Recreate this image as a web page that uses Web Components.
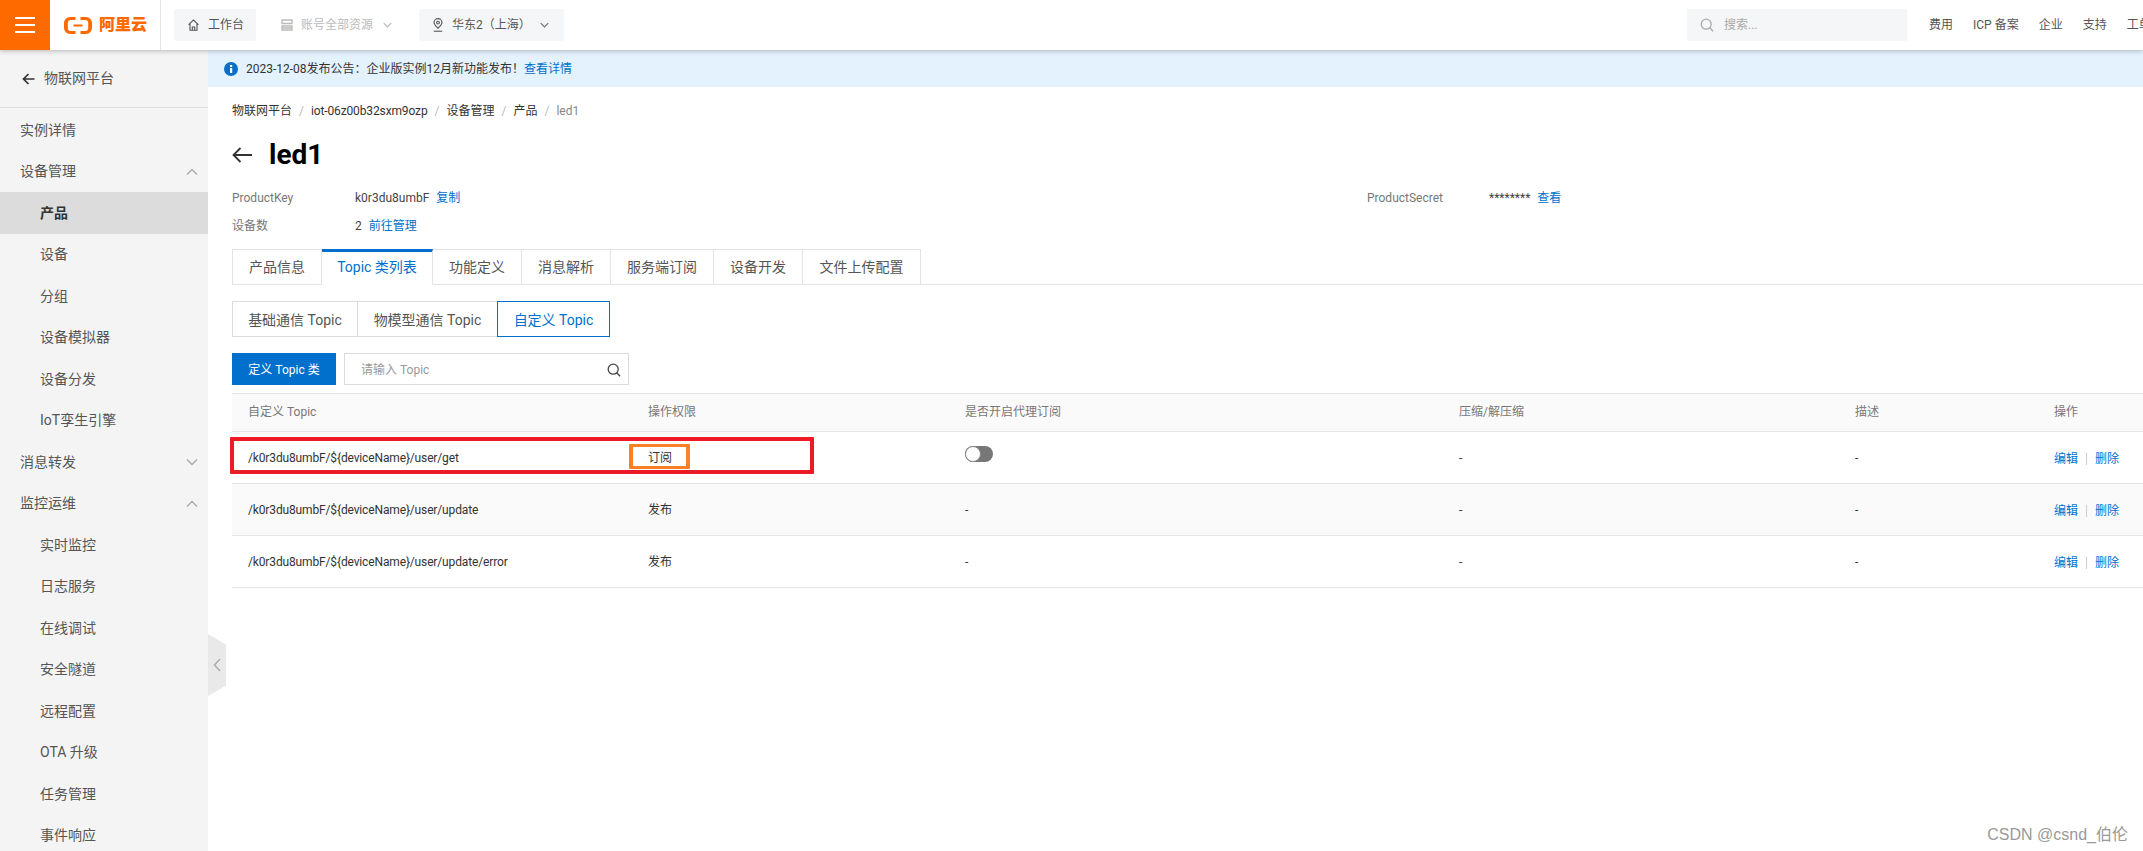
<!DOCTYPE html>
<html lang="zh">
<head>
<meta charset="utf-8">
<title>led1</title>
<style>
  html, body { margin: 0; height: 100%; overflow: hidden; }
  body { font: 12px/1.5 Roboto, "Noto Sans CJK SC", sans-serif; color: #333; background: #fff; }
</style>
</head>
<body>
<iot-app>
  <iot-topbar slot="top"></iot-topbar>
  <iot-sidenav slot="side">
    <nav-item>实例详情</nav-item>
    <nav-item arrow="up">设备管理</nav-item>
    <nav-item sub active>产品</nav-item>
    <nav-item sub>设备</nav-item>
    <nav-item sub>分组</nav-item>
    <nav-item sub>设备模拟器</nav-item>
    <nav-item sub>设备分发</nav-item>
    <nav-item sub>IoT孪生引擎</nav-item>
    <nav-item arrow="down">消息转发</nav-item>
    <nav-item arrow="up">监控运维</nav-item>
    <nav-item sub>实时监控</nav-item>
    <nav-item sub>日志服务</nav-item>
    <nav-item sub>在线调试</nav-item>
    <nav-item sub>安全隧道</nav-item>
    <nav-item sub>远程配置</nav-item>
    <nav-item sub>OTA 升级</nav-item>
    <nav-item sub>任务管理</nav-item>
    <nav-item sub>事件响应</nav-item>
  </iot-sidenav>
  <notice-bar>2023-12-08发布公告：企业版实例12月新功能发布！<a slot="link">查看详情</a></notice-bar>
  <product-page></product-page>
</iot-app>

<script>
const ICON = {
  down: '<svg width="12" height="8" viewBox="0 0 12 8" fill="none" stroke="currentColor" stroke-width="1.4"><path d="M1 1.5l5 5 5-5"/></svg>',
  up: '<svg width="12" height="8" viewBox="0 0 12 8" fill="none" stroke="currentColor" stroke-width="1.4"><path d="M1 6.5l5-5 5 5"/></svg>',
  search: '<svg width="14" height="14" viewBox="0 0 14 14" fill="none" stroke="currentColor" stroke-width="1.3"><circle cx="6.2" cy="6.2" r="5"/><path d="M9.8 9.8l3.2 3.4"/></svg>'
}

/**
 * Registers a custom element with an open shadow root.
 *
 * @param {string} name - The tag name.
 * @param {string} html - Style and markup of the shadow root.
 */
function define (name, html) {
  const template = document.createElement('template')
  template.innerHTML = html
  customElements.define(name, class extends HTMLElement {
    constructor () {
      super()
      this.attachShadow({ mode: 'open' }).appendChild(template.content.cloneNode(true))
    }
  })
}

define('iot-app', `
  <style>
    :host { display: grid; grid-template: 50px 1fr / 208px 1fr; height: 851px; overflow: hidden; position: relative; }
    .top { grid-column: 1 / 3; position: relative; z-index: 2; }
    .side { display: block; min-height: 0; overflow: hidden; }
    main { min-width: 0; overflow: hidden; }
    .fold { position: absolute; left: 208px; top: 634px; width: 18px; height: 62px; background: #e9e9e9; color: #aaa;
      clip-path: polygon(0 0, 100% 17%, 100% 83%, 0 100%); display: flex; align-items: center; justify-content: center; }
    .mark { position: absolute; right: 15px; bottom: 5px; font: 16px/22px "Liberation Sans", "Noto Sans CJK SC", sans-serif; color: #999; }
  </style>
  <div class="top"><slot name="top"></slot></div>
  <div class="side"><slot name="side"></slot></div>
  <main><slot></slot></main>
  <div class="fold"><svg width="8" height="14" viewBox="0 0 8 14" fill="none" stroke="currentColor" stroke-width="1.4"><path d="M7 1L1.5 7 7 13"/></svg></div>
  <div class="mark">CSDN @csnd_伯伦</div>
`)

define('iot-topbar', `
  <style>
    :host { display: flex; align-items: center; height: 50px; background: #fff; box-shadow: 0 1px 5px rgba(0,0,0,.25); color: #555; }
    .menu { width: 50px; height: 50px; background: #ff6a00; display: flex; align-items: center; justify-content: center; flex: none; }
    .logo { width: 111px; height: 50px; box-sizing: border-box; border-right: 1px solid #e5e5e5; padding-left: 14px; display: flex; align-items: center; gap: 7px; color: #ff6a00; flex: none; }
    .logo b { font-size: 16px; line-height: 20px; letter-spacing: 0; font-weight: 900; }
    .btn { display: flex; align-items: center; height: 32px; background: #f5f6f8; flex: none; box-sizing: border-box; }
    .home { margin-left: 13px; width: 82px; padding-left: 14px; gap: 9px; border-radius: 2px; }
    .acct { margin-left: 25px; background: none; color: #bbb; gap: 8px; }
    .acct i { margin-left: 2px; display: flex; }
    .region { margin-left: 27px; width: 145px; padding: 0 15px 0 14px; gap: 9px; border-radius: 2px; }
    .region i { margin-left: auto; display: flex; color: #777; }
    .right { margin-left: auto; width: 456px; flex: none; display: flex; align-items: center; overflow: hidden; }
    .search { width: 220px; height: 32px; background: #f5f6f8; display: flex; align-items: center; gap: 10px; padding-left: 13px; box-sizing: border-box; color: #aaa; flex: none; }
    .links { display: flex; gap: 20px; margin-left: 22px; white-space: nowrap; flex: none; }
  </style>
  <div class="menu">
    <svg width="20" height="16" viewBox="0 0 20 16" fill="#fff"><rect y="0" width="20" height="2"/><rect y="7" width="20" height="2"/><rect y="14" width="20" height="2"/></svg>
  </div>
  <div class="logo">
    <svg width="28" height="17" viewBox="0 0 28 17"><path fill="#ff6a00" d="M6 0h5.500v3H6.800a3 3 0 0 0-3 3v5a3 3 0 0 0 3 3h4.700v3H6a6 6 0 0 1-6-6V6a6 6 0 0 1 6-6zM16.500 0H22a6 6 0 0 1 6 6v5a6 6 0 0 1-6 6h-5.500v-3h4.700a3 3 0 0 0 3-3V6a3 3 0 0 0-3-3h-4.700zM9.500 7.500h9v2h-9z"/></svg>
    <b>阿里云</b>
  </div>
  <div class="btn home">
    <svg width="11" height="12" viewBox="0 0 11 12" fill="none" stroke="#555" stroke-width="1.1"><path d="M.6 5.600L5.500 1l4.900 4.600M2 4.600v6.600h7V4.600M4.300 11.200V8h2.400v3.200"/></svg>
    <span>工作台</span>
  </div>
  <div class="btn acct">
    <svg width="12" height="12" viewBox="0 0 12 12" fill="none" stroke="#bbb" stroke-width="1.400"><path d="M1 1h10v3.500H1zM1 7h10v4H1zM1 9h10"/></svg>
    <span>账号全部资源</span>
    <i><svg width="9" height="6" viewBox="0 0 12 8" fill="none" stroke="currentColor" stroke-width="1.800"><path d="M1 1.500l5 5 5-5"/></svg></i>
  </div>
  <div class="btn region">
    <svg width="10" height="14" viewBox="0 0 10 14" fill="none" stroke="#555" stroke-width="1.100"><path d="M5 10.300C3 8.300 1 6.700 1 4.600a4 4 0 0 1 8 0c0 2.100-2 3.700-4 5.700z"/><circle cx="5" cy="4.600" r="1.400"/><path d="M.8 13.200h8.400"/></svg>
    <span>华东2（上海）</span>
    <i><svg width="9" height="6" viewBox="0 0 12 8" fill="none" stroke="currentColor" stroke-width="1.800"><path d="M1 1.500l5 5 5-5"/></svg></i>
  </div>
  <div class="right">
    <div class="search">${ICON.search}<span>搜索...</span></div>
    <div class="links"><span>费用</span><span>ICP 备案</span><span>企业</span><span>支持</span><span>工单</span></div>
  </div>
`)

define('iot-sidenav', `
  <style>
    :host { display: block; height: 100%; background: #f4f4f4; color: #555; font-size: 14px; overflow: hidden; }
    header { height: 57px; border-bottom: 1px solid #dedede; display: flex; align-items: center; gap: 9px; padding-left: 22px; }
    .list { padding-top: 1.250px; }
  </style>
  <header>
    <svg width="13" height="12" viewBox="0 0 13 12" fill="none" stroke="#333" stroke-width="1.700"><path d="M12.500 6H1.500M6.500 1l-5 5 5 5"/></svg>
    <span>物联网平台</span>
  </header>
  <div class="list"><slot></slot></div>
`)

define('nav-item', `
  <style>
    :host { display: flex; align-items: center; justify-content: space-between; height: 41.500px; padding: 0 10px 0 20px; box-sizing: border-box; color: #555; }
    :host([sub]) { padding-left: 40px; }
    :host([active]) { background: #dcdcdc; color: #333; font-weight: 700; }
    .a { display: none; color: #aaa; line-height: 0; }
    :host([arrow]) .a { display: block; }
  </style>
  <span><slot></slot></span>
  <span class="a"></span>
`)
customElements.whenDefined('nav-item').then(() => {
  document.querySelectorAll('nav-item[arrow]').forEach((item) => {
    item.shadowRoot.querySelector('.a').innerHTML = ICON[item.getAttribute('arrow')]
  })
})

define('notice-bar', `
  <style>
    :host { display: flex; align-items: center; height: 37px; background: #e3f2fd; padding-left: 16px; color: #333; }
    svg { margin-right: 8px; flex: none; }
    ::slotted(a) { color: #0070cc; margin-left: 0; }
  </style>
  <svg width="14" height="14" viewBox="0 0 14 14"><circle cx="7" cy="7" r="7" fill="#0a6fc9"/><rect x="6" y="6" width="2.200" height="5" fill="#fff"/><rect x="6" y="3" width="2.200" height="2" fill="#fff"/></svg>
  <slot></slot><slot name="link"></slot>
`)

define('bread-crumb', `
  <style>
    :host { display: flex; height: 20px; align-items: center; white-space: nowrap; color: #333; }
    i { font-style: normal; color: #bbb; margin: 0 7px; }
    span:last-child { color: #888; }
    .id { letter-spacing: -.13px; }
  </style>
  <span>物联网平台</span><i>/</i><span class="id">iot-06z00b32sxm9ozp</span><i>/</i><span>设备管理</span><i>/</i><span>产品</span><i>/</i><span>led1</span>
`)

define('tab-item', `
  <style>
    :host { display: block; height: 36px; box-sizing: border-box; border: 1px solid #e3e3e3; border-left: 0; line-height: 34px; text-align: center; font-size: 14px; color: #555; background: #fff; white-space: nowrap; }
    :host(:first-child) { border-left: 1px solid #e3e3e3; }
    :host([active]) { color: #0070cc; border-top: 3px solid #0070cc; border-bottom-color: #fff; line-height: 31px; }
  </style>
  <slot></slot>
`)

define('tab-bar', `
  <style>
    :host { display: flex; height: 36px; box-shadow: inset 0 -2px 0 -1px #e3e3e3; }
  </style>
  <slot></slot>
`)

define('segment-item', `
  <style>
    :host { display: block; height: 36px; box-sizing: border-box; border: 1px solid #dcdcdc; margin-right: -1px; padding-top: 1px; line-height: 34px; text-align: center; font-size: 14px; color: #555; white-space: nowrap; background: #fff; }
    :host([active]) { color: #0070cc; border-color: #0070cc; position: relative; }
  </style>
  <slot></slot>
`)

define('topic-tools', `
  <style>
    :host { display: flex; gap: 8px; height: 32px; }
    button { width: 104px; height: 32px; border: 0; padding: 1px 0 0; background: #0070cc; color: #fff; font: inherit; }
    .input { width: 285px; height: 32px; box-sizing: border-box; border: 1px solid #dcdcdc; display: flex; align-items: center; justify-content: space-between; padding: 1px 7px 0 16px; color: #999; }
    .input svg { color: #444; }
  </style>
  <button>定义 Topic 类</button>
  <div class="input"><span>请输入 Topic</span>${ICON.search}</div>
`)

define('topic-row', `
  <style>
    :host { display: grid; grid-template-columns: 400px 317px 494px 396px 199px 105px; height: 52px; box-sizing: border-box; border-bottom: 1px solid #e6e6e6; align-items: center; color: #333; white-space: nowrap; }
    :host([head]) { height: 39px; padding-bottom: 1px; background: #fafafa; color: #777; border-top: 1px solid #e6e6e6; }
    :host([stripe]) { background: #fafafa; }
    ::slotted(*) { padding-left: 16px; }
    ::slotted(.path) { letter-spacing: -.14px; }
  </style>
  <slot></slot>
`)

define('topic-switch', `
  <style>
    :host { display: block; width: 28px; height: 16px; margin-bottom: 7px; border-radius: 8px; background: #777; position: relative; }
    div { position: absolute; left: 0; top: 0; width: 16px; height: 16px; box-sizing: border-box; border-radius: 50%; background: #fff; border: 1px solid #888; }
  </style>
  <div></div>
`)

define('row-actions', `
  <style>
    :host { display: flex; align-items: center; color: #0070cc; padding-top: 3px; }
    i { width: 1px; height: 12px; background: #ccc; margin: 0 8px; }
  </style>
  <span>编辑</span><i></i><span>删除</span>
`)

define('mark-box', `
  <style>
    :host { position: absolute; display: block; box-sizing: border-box; border: 4px solid var(--c); border-radius: 1px; pointer-events: none; }
  </style>
`)

define('product-page', `
  <style>
    :host { display: block; padding: 14px 0 0 24px; color: #333; position: relative; }
    .title { display: flex; align-items: center; gap: 17px; height: 40px; margin-top: 14px; font-size: 28px; font-weight: 700; color: #000; }
    .info { display: grid; grid-template-columns: 123px 1012px 122px 1fr; grid-auto-rows: 28px; align-items: center; margin-top: 9px; }
    .info .k { color: #777; }
    .info .v { color: #444; }
    a { color: #0070cc; margin-left: 4px; }
    tab-bar { margin-top: 9px; }
    .seg { display: flex; margin-top: 16px; }
    topic-tools { margin-top: 16px; }
    .table { margin-top: 8px; position: relative; }
    .red { --c: #ed1c24; left: -2px; top: 44px; width: 584px; height: 37px; }
    .orange { --c: #ff7f27; left: 397px; top: 51px; width: 61px; height: 25px; border-width: 3px 4px; }
  </style>
  <bread-crumb></bread-crumb>
  <div class="title">
    <svg width="20" height="16" viewBox="0 0 20 16" fill="none" stroke="#333" stroke-width="1.800"><path d="M20 8H1.500M8.500 1l-7 7 7 7"/></svg>
    <span>led1</span>
  </div>
  <div class="info">
    <span class="k">ProductKey</span><span class="v">k0r3du8umbF <a>复制</a></span>
    <span class="k">ProductSecret</span><span class="v">******** <a>查看</a></span>
    <span class="k">设备数</span><span class="v">2 <a>前往管理</a></span>
  </div>
  <tab-bar>
    <tab-item style="width:90px">产品信息</tab-item>
    <tab-item active style="width:111px">Topic 类列表</tab-item>
    <tab-item style="width:89px">功能定义</tab-item>
    <tab-item style="width:89px">消息解析</tab-item>
    <tab-item style="width:103px">服务端订阅</tab-item>
    <tab-item style="width:89px">设备开发</tab-item>
    <tab-item style="width:118px">文件上传配置</tab-item>
  </tab-bar>
  <div class="seg">
    <segment-item style="width:126px">基础通信 Topic</segment-item>
    <segment-item style="width:141px">物模型通信 Topic</segment-item>
    <segment-item active style="width:113px">自定义 Topic</segment-item>
  </div>
  <topic-tools></topic-tools>
  <div class="table">
    <topic-row head><span>自定义 Topic</span><span>操作权限</span><span>是否开启代理订阅</span><span>压缩/解压缩</span><span>描述</span><span>操作</span></topic-row>
    <topic-row><span class="path">/k0r3du8umbF/\${deviceName}/user/get</span><span>订阅</span><div><topic-switch></topic-switch></div><span>-</span><span>-</span><div><row-actions></row-actions></div></topic-row>
    <topic-row stripe><span class="path">/k0r3du8umbF/\${deviceName}/user/update</span><span>发布</span><span>-</span><span>-</span><span>-</span><div><row-actions></row-actions></div></topic-row>
    <topic-row><span class="path">/k0r3du8umbF/\${deviceName}/user/update/error</span><span>发布</span><span>-</span><span>-</span><span>-</span><div><row-actions></row-actions></div></topic-row>
    <mark-box class="red"></mark-box>
    <mark-box class="orange"></mark-box>
  </div>
`)
</script>
</body>
</html>
